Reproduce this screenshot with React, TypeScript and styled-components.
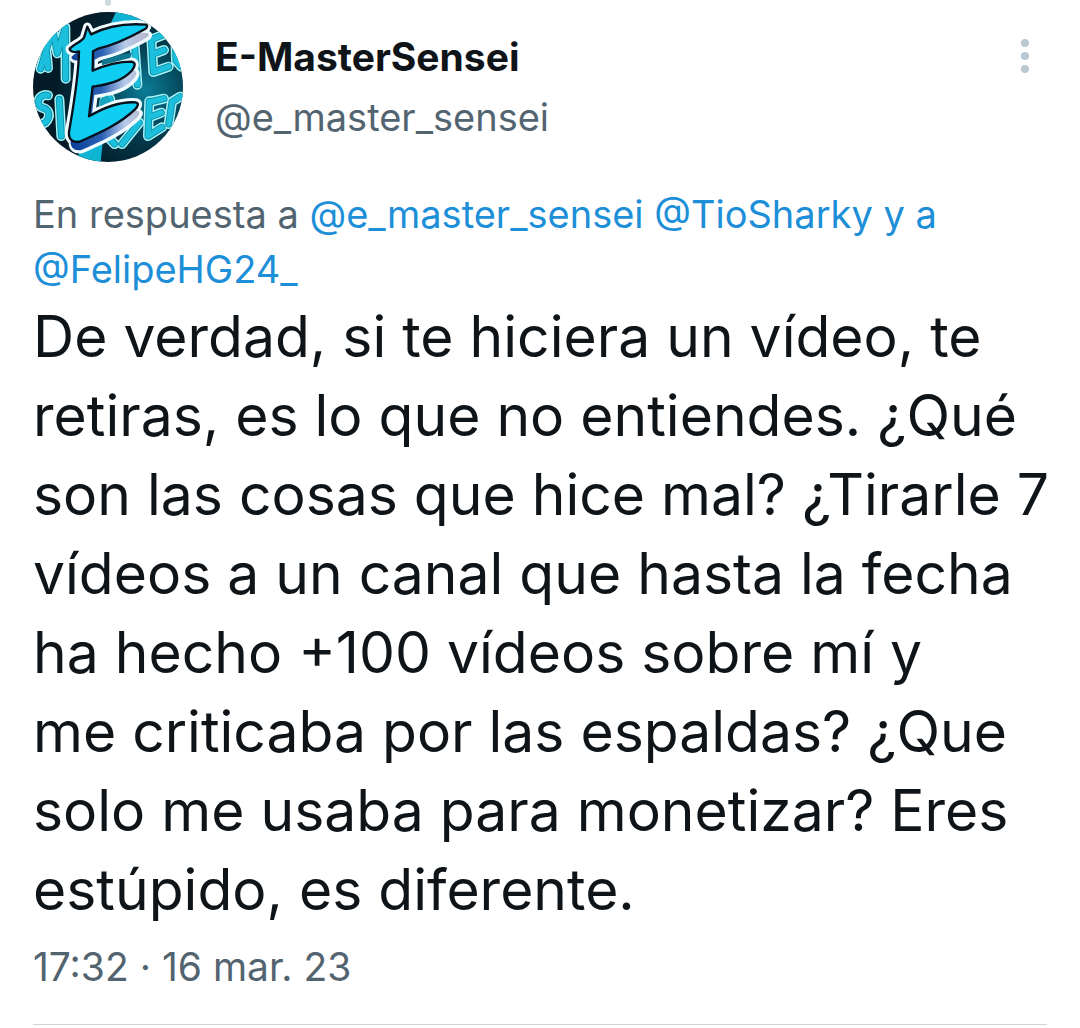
import React from "react";
import styled, { createGlobalStyle } from "styled-components";

const GlobalStyle = createGlobalStyle`
  *, *::before, *::after { box-sizing: border-box; }
  body {
    margin: 0;
    background: #ffffff;
    color: #0f1419;
    font-family: Inter, "Liberation Sans", sans-serif;
  }
`;

const Tweet = styled.article`
  padding: 0 33px;
`;

const Header = styled.header`
  display: flex;
  align-items: flex-start;
`;

const AvatarColumn = styled.div`
  display: flex;
  flex-direction: column;
  align-items: center;
  gap: 6px;
  width: 150px;
  flex: none;
`;

const ThreadLine = styled.div`
  width: 6px;
  height: 6px;
  border-radius: 0 0 3px 3px;
  background: #cfd9de;
`;

const Avatar = styled.svg`
  display: block;
  width: 150px;
  height: 150px;
  border-radius: 50%;
`;

const Names = styled.div`
  flex: 1;
  min-width: 0;
  padding: 27px 0 0 32px;
`;

const DisplayName = styled.h1`
  margin: 0;
  font-size: 39px;
  line-height: 60px;
  font-weight: 700;
`;

const Handle = styled.p`
  margin: 0;
  font-size: 38px;
  line-height: 60px;
  color: #536471;
`;

const MenuButton = styled.button`
  display: flex;
  flex-direction: column;
  align-items: center;
  gap: 5px;
  width: 44px;
  margin-top: 31px;
  padding: 8px 0;
  border: 0;
  background: none;
  cursor: pointer;
`;

const Dot = styled.span`
  width: 8px;
  height: 8px;
  border-radius: 50%;
  background: #b9c8d0;
`;

const ReplyTo = styled.p`
  margin: 25px 0 0;
  font-size: 38px;
  line-height: 55px;
  color: #536471;
`;

const Mention = styled.a`
  color: #1d8fd8;
  text-decoration: none;
`;

const Body = styled.p`
  margin: 0;
  font-size: 57px;
  line-height: 79px;
  white-space: nowrap;
`;

const Line = styled.span`
  display: block;
`;

const Timestamp = styled.time`
  display: block;
  padding: 8px 0 27px;
  font-size: 39px;
  line-height: 60px;
  color: #536471;
  border-bottom: 1px solid #cfd6d9;
`;

const LINES = [
  "De verdad, si te hiciera un vídeo, te",
  "retiras, es lo que no entiendes. ¿Qué",
  "son las cosas que hice mal? ¿Tirarle 7",
  "vídeos a un canal que hasta la fecha",
  "ha hecho +100 vídeos sobre mí y",
  "me criticaba por las espaldas? ¿Que",
  "solo me usaba para monetizar? Eres",
  "estúpido, es diferente.",
];

const EMBLEM =
  "M202 80 L213 103 C255 82 315 69 378 74 C384 77 381 84 374 88 C331 112 285 135 234 146 L219 154 L218 212 C252 197 295 185 335 185 C348 188 346 199 335 212 C306 244 264 253 218 260 L207 349 C251 323 299 304 347 307 C358 310 354 319 345 328 C297 374 235 400 181 424 C158 430 145 418 147 396 C161 314 176 232 177 154 C163 159 150 155 149 146 C162 133 182 126 192 113 Z";

const BRUSH_STROKES = [
  "M62 206 C74 166 88 120 98 88 L112 160 L136 82 L137 236",
  "M80 160 L84 204",
  "M84 286 C52 280 46 320 70 324 C100 332 86 376 58 372",
  "M118 298 L124 408",
  "M344 140 L352 254",
  "M394 116 L400 216 L446 200 M396 118 L436 102 M400 162 L432 150",
  "M466 112 L468 182 L484 200",
  "M388 304 L384 408 L426 382 M388 306 L432 296 M388 352 L424 338",
  "M456 306 L446 372 M458 304 L480 290",
  "M254 300 L248 360 M270 296 L280 340",
  "M258 404 L284 432 M306 432 L358 368",
];

function AvatarArt() {
  return (
    <Avatar viewBox="39 36 450 450" role="img" aria-label="E-MasterSensei">
      <defs>
        <radialGradient id="backdrop" cx="0.75" cy="0.52" r="0.6">
          <stop offset="0" stopColor="#0a7d96" />
          <stop offset="0.5" stopColor="#043c4e" />
          <stop offset="1" stopColor="#021b27" />
        </radialGradient>
        <linearGradient id="depth" x1="0" y1="0" x2="1" y2="0">
          <stop offset="0" stopColor="#0b3d96" />
          <stop offset="0.4" stopColor="#2a61b5" />
          <stop offset="0.7" stopColor="#b7cbe8" />
          <stop offset="1" stopColor="#b8b4c8" />
        </linearGradient>
      </defs>
      <rect x="39" y="36" width="450" height="450" fill="url(#backdrop)" />
      <path d="M288 36 H370 L376 72 L270 74 Z M180 448 L248 428 L242 486 H170 Z" fill="#0fb4d2" />
      <g fill="none" strokeLinecap="round" strokeLinejoin="round">
        {BRUSH_STROKES.map((d) => (
          <path key={d} d={d} stroke="#a5f3f7" strokeWidth="30" />
        ))}
        {BRUSH_STROKES.map((d) => (
          <path key={d} d={d} stroke="#0a8ea8" strokeWidth="21" />
        ))}
        {BRUSH_STROKES.map((d) => (
          <path key={d} d={d} stroke="#1cc0dd" strokeWidth="16" />
        ))}
      </g>
      <g strokeLinejoin="round">
        <path d={EMBLEM} fill="#effbff" stroke="#effbff" strokeWidth="25" />
        <path d={EMBLEM} transform="translate(7 27)" fill="#effbff" stroke="#effbff" strokeWidth="16" />
        <path d={EMBLEM} transform="translate(5 25)" fill="url(#depth)" />
        <path d="M246 180 L298 164 L336 158 L330 174 L246 196 Z" fill="#0f7890" />
        <path d="M240 298 L262 286 L274 304 L238 320 Z" fill="#17a5bf" />
        <path d={EMBLEM} fill="#10cdf2" stroke="#06111b" strokeWidth="7" />
      </g>
    </Avatar>
  );
}

export default function App() {
  return (
    <>
      <GlobalStyle />
      <Tweet>
        <Header>
          <AvatarColumn>
            <ThreadLine />
            <AvatarArt />
          </AvatarColumn>
          <Names>
            <DisplayName>E-MasterSensei</DisplayName>
            <Handle>@e_master_sensei</Handle>
          </Names>
          <MenuButton type="button" aria-label="Más opciones">
            <Dot />
            <Dot />
            <Dot />
          </MenuButton>
        </Header>
        <ReplyTo>
          En respuesta a <Mention href="#e_master_sensei">@e_master_sensei</Mention>{" "}
          <Mention href="#TioSharky">@TioSharky y a</Mention>{" "}
          <Mention href="#FelipeHG24_">@FelipeHG24_</Mention>
        </ReplyTo>
        <Body>
          {LINES.map((line) => (
            <Line key={line}>{line}</Line>
          ))}
        </Body>
        <Timestamp dateTime="2023-03-16T17:32">17:32 · 16 mar. 23</Timestamp>
      </Tweet>
    </>
  );
}
